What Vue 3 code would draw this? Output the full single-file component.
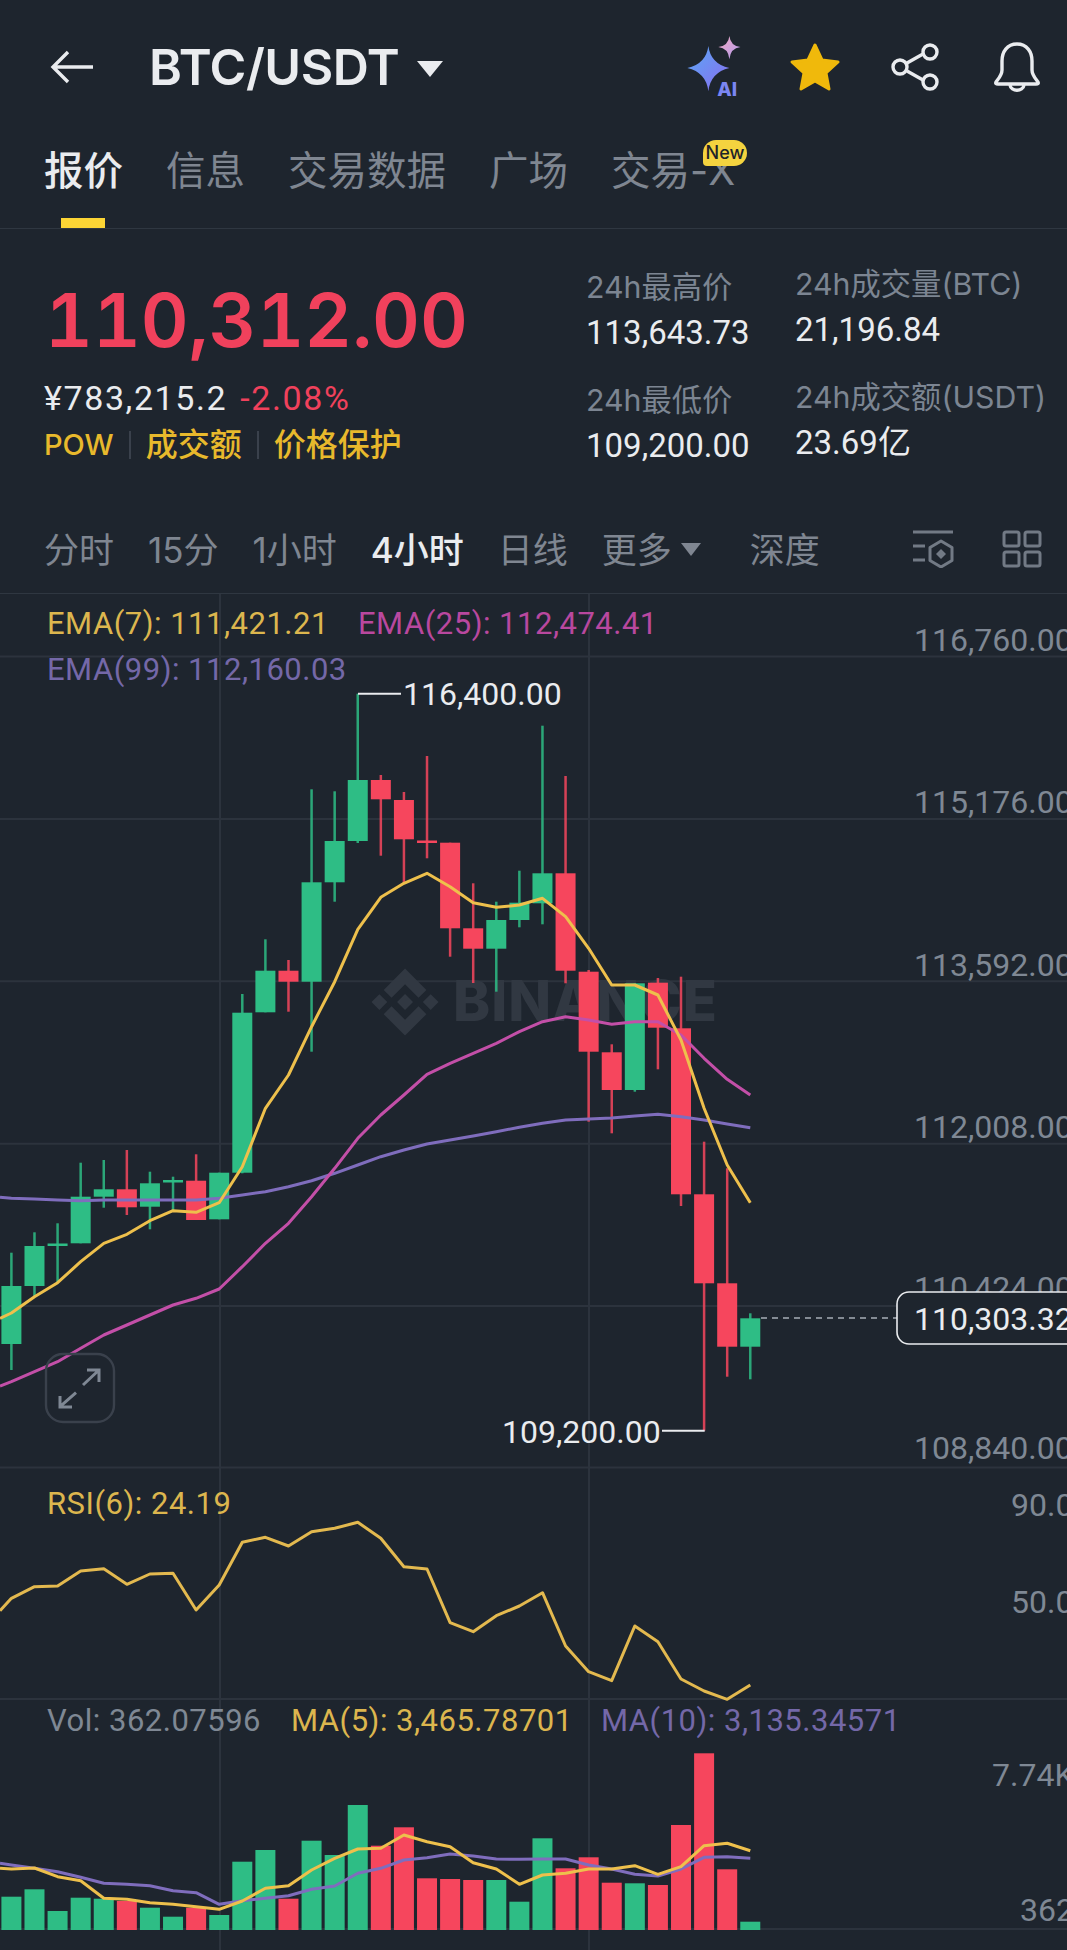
<script setup>
const tabs = ['报价', '信息', '交易数据', '广场', '交易-X']
const frames = ['分时', '15分', '1小时', '4小时', '日线']

const green = '#2ebd85'
const red = '#f6465d'
const step = 23.09
const cx = (i) => 11.4 + step * i

// [high, bodyTop, bodyBottom, low, up]
const raw = [
  [1252.7, 1286, 1344, 1370, 1],
  [1232.3, 1246, 1286, 1297, 1],
  [1223.3, 1243.5, 1246, 1282, 1],
  [1162.7, 1196.7, 1243.3, 1243.3, 1],
  [1160, 1189.3, 1196.7, 1207.7, 1],
  [1150, 1189.3, 1207.3, 1215, 0],
  [1171.7, 1183.3, 1206.7, 1229.3, 1],
  [1176.7, 1180, 1182.5, 1210, 1],
  [1154.3, 1180.7, 1220, 1220, 0],
  [1172.7, 1172.7, 1219.3, 1219.3, 1],
  [994, 1012.7, 1172.7, 1173.3, 1],
  [939.3, 970.7, 1012.3, 1012.3, 1],
  [960, 970.7, 981.7, 1011.7, 0],
  [789.3, 882.3, 981.7, 1051.7, 1],
  [791.3, 841, 882.3, 901.7, 1],
  [693.7, 780, 841, 843, 1],
  [775, 780, 799.3, 855.7, 0],
  [792, 800, 839.3, 883, 0],
  [756, 840.5, 842.5, 858.3, 0],
  [842.7, 842.7, 928.3, 956.7, 0],
  [883.3, 928.3, 948.7, 983, 0],
  [901.7, 920, 948.7, 991.7, 1],
  [870.7, 902.7, 920, 927.3, 1],
  [725.7, 873.3, 903.3, 924.3, 1],
  [776, 873.3, 970.7, 983.3, 0],
  [970, 971.7, 1051.7, 1121.7, 0],
  [1044.3, 1052.3, 1090, 1133.3, 0],
  [983.3, 983.3, 1090, 1091.7, 1],
  [978, 982.7, 1027.7, 1069.3, 0],
  [976.7, 1028.3, 1194.3, 1206, 0],
  [1141.7, 1194.3, 1283.3, 1430.7, 0],
  [1168.3, 1283.3, 1346.7, 1376.7, 0],
  [1313.3, 1318.3, 1346.7, 1379.3, 1],
]
const candles = raw.map((c, i) => ({
  x: cx(i), high: c[0], top: c[1], h: c[2] - c[1], low: c[3], color: c[4] ? green : red,
}))

const volTops = [
  1896.7, 1889.3, 1911, 1897.7, 1898.7, 1901, 1907.7, 1916.7, 1907.7, 1915, 1861.7,
  1850, 1898.7, 1840.7, 1855, 1805, 1845.7, 1827.3, 1878.3, 1879, 1880, 1880, 1901.7,
  1838.3, 1868.3, 1857.3, 1882.7, 1883.3, 1885, 1825, 1753.3, 1869.3, 1921.7,
]
const volBase = 1930
const bars = volTops.map((t, i) => ({ x: cx(i) - 10, y: t, h: volBase - t, color: raw[i][4] ? green : red }))

// line helper: first value sits on the left edge, the rest on candle centres
const line = (start, vals) => `0,${start} ` + vals.map((v, i) => `${cx(i).toFixed(1)},${v}`).join(' ')

const ema7 = line(1318.3, [1313, 1296.7, 1282.7, 1261.7, 1243.3, 1234.3, 1220.7, 1210.7, 1212.3, 1202.7, 1166.7, 1108.3, 1075, 1026.7, 981.7, 929.3, 897.3, 883.3, 873.3, 886.7, 902.7, 907.3, 905, 898.3, 916.7, 948.3, 985, 985, 995, 1040, 1108.3, 1165, 1202.7])
const ema25 = line(1386, [1381.7, 1371.7, 1361.7, 1348.3, 1335, 1325, 1315, 1305, 1298.3, 1289, 1266.7, 1243.3, 1223.3, 1196.7, 1168.3, 1138.3, 1115, 1095, 1074.3, 1063.3, 1053.3, 1043.3, 1031.7, 1021.7, 1016.7, 1020, 1024.3, 1021.7, 1021.7, 1035, 1058.3, 1079.3, 1095])
const ema99 = line(1197.3, [1198.3, 1199, 1200, 1200.7, 1200, 1200, 1200, 1200, 1200, 1198.3, 1195, 1191.7, 1186.7, 1180.7, 1173.3, 1165, 1156.7, 1150, 1144, 1140, 1136, 1131.7, 1127.3, 1123.3, 1120, 1119, 1118, 1116, 1114.3, 1116.7, 1120, 1124, 1127.7])
const rsi = line(1610.7, [1598.3, 1586.7, 1586, 1571, 1568.7, 1584.3, 1574, 1573.3, 1610, 1585, 1542.3, 1537.3, 1546, 1531.7, 1528.3, 1522.3, 1538.3, 1566.7, 1569, 1622.7, 1631.7, 1615.7, 1606, 1592.7, 1646, 1671.7, 1680.7, 1626, 1641.7, 1679, 1691, 1699.3, 1685])
const ma5 = line(1868.3, [1869, 1868, 1876.7, 1880.7, 1898.3, 1899.3, 1902.7, 1904.3, 1906.7, 1909.3, 1901, 1888.3, 1885.7, 1870, 1858.3, 1849, 1848.3, 1835, 1841.7, 1846.7, 1862.7, 1869, 1884.3, 1875, 1873.3, 1869, 1869, 1865.7, 1874.3, 1866.7, 1845.7, 1843.3, 1850.7])
const ma10 = line(1863.3, [1865, 1868.3, 1871.7, 1877.3, 1883.3, 1884.3, 1885.7, 1890.7, 1892.7, 1904.3, 1900.7, 1898.3, 1895.7, 1889.3, 1886, 1873.3, 1868.3, 1860, 1857.7, 1854, 1856, 1859, 1859.3, 1859, 1859, 1865, 1869, 1874.3, 1876, 1869, 1857.3, 1856.7, 1858.3])

const gridY = [656.5, 819, 981.3, 1143.7, 1306, 1467.5, 1699, 1929]
const axis = [
  { t: '116,760.00', x: 914, y: 640 },
  { t: '115,176.00', x: 914, y: 802 },
  { t: '113,592.00', x: 914, y: 965 },
  { t: '112,008.00', x: 914, y: 1127 },
  { t: '110,424.00', x: 914, y: 1288 },
  { t: '108,840.00', x: 914, y: 1448 },
  { t: '90.00', x: 1011, y: 1505 },
  { t: '50.00', x: 1011, y: 1602 },
  { t: '7.74K', x: 992, y: 1775 },
  { t: '362', x: 1020, y: 1910 },
]
</script>

<template>
  <div class="page">
    <header class="top">
      <svg class="back" width="44" height="34" viewBox="0 0 44 34">
        <path d="M18 2 3 17 18 32M3 17H43" fill="none" stroke="#eaecef" stroke-width="3.4" />
      </svg>
      <span class="pair">BTC/USDT</span>
      <span class="caret"></span>
      <div class="top-icons">
        <svg width="56" height="62" viewBox="0 0 50 56">
          <defs>
            <linearGradient id="sparkA" x1="0" y1="0" x2="1" y2="1">
              <stop offset="0" stop-color="#5aa9f5" />
              <stop offset="1" stop-color="#8a6cf0" />
            </linearGradient>
            <linearGradient id="sparkB" x1="0" y1="0" x2="1" y2="1">
              <stop offset="0" stop-color="#f0a9c0" />
              <stop offset="1" stop-color="#b39af0" />
            </linearGradient>
          </defs>
          <path d="M19 9Q21 25 38 29 21 33 19 50 17 33 0 29 17 25 19 9Z" fill="url(#sparkA)" />
          <path d="M38 0Q39 9 48 10 39 11 38 21 37 11 28 10 37 9 38 0Z" fill="url(#sparkB)" />
          <text class="ai" x="27" y="54">AI</text>
        </svg>
        <svg class="star" width="52" height="50" viewBox="0 0 52 50">
          <path d="M26 3 33 18 49 20 37 31 40 47 26 39 12 47 15 31 3 20 19 18Z" fill="#f0b90b" stroke="#f0b90b" stroke-width="3" stroke-linejoin="round" />
        </svg>
        <svg class="share" width="50" height="48" viewBox="0 0 50 48">
          <g fill="none" stroke="#eaecef" stroke-width="3.4">
            <path d="M16 20 32 11M16 28 32 37" />
            <circle cx="9" cy="24" r="7" />
            <circle cx="39" cy="9" r="7" />
            <circle cx="39" cy="39" r="7" />
          </g>
        </svg>
        <svg class="bell" width="48" height="52" viewBox="0 0 48 52">
          <g fill="none" stroke="#eaecef" stroke-width="3.4" stroke-linejoin="round">
            <path d="M24 3C14 3 9 11 9 20V29C9 34 6 37 3 41Q2 43 5 43H43Q46 43 45 41C42 37 39 34 39 29V20C39 11 34 3 24 3Z" />
            <path d="M17 44C18 51 30 51 31 44" />
          </g>
        </svg>
      </div>
    </header>

    <nav class="tabs">
      <span v-for="(t, i) in tabs" :key="t" class="tab" :class="{ on: i === 0 }">
        {{ t }}
        <i v-if="i === 0" class="bar"></i>
        <b v-if="i === 4" class="new">New</b>
      </span>
    </nav>

    <section class="quote">
      <div class="quote-left">
        <div class="price">110,312.00</div>
        <div class="sub"><span class="cny">¥783,215.2</span><span class="pct">-2.08%</span></div>
        <div class="tags">
          <span class="pow">POW</span><i></i><span>成交额</span><i></i><span>价格保护</span>
        </div>
      </div>
      <div class="stats first">
        <div class="lbl">24h最高价</div>
        <div class="val">113,643.73</div>
        <div class="lbl">24h最低价</div>
        <div class="val">109,200.00</div>
      </div>
      <div class="stats second">
        <div class="lbl">24h成交量(BTC)</div>
        <div class="val">21,196.84</div>
        <div class="lbl">24h成交额(USDT)</div>
        <div class="val">23.69亿</div>
      </div>
    </section>

    <div class="frames">
      <span v-for="f in frames" :key="f" class="frame" :class="{ on: f === '4小时' }">{{ f }}</span>
      <span class="frame more">更多<i class="more-caret"></i></span>
      <span class="frame">深度</span>
      <div class="frame-icons">
        <svg width="42" height="38" viewBox="0 0 42 38">
          <g fill="none" stroke="#727a85" stroke-width="3">
            <path d="M1 2H41M1 16H13M1 30H13" />
            <path d="M29 11 40 17.5V30.5L29 37 18 30.5V17.5Z" stroke-linejoin="round" />
            <path d="M29 19 34 24 29 29 24 24Z" fill="#727a85" stroke="none" />
          </g>
        </svg>
        <svg width="40" height="38" viewBox="0 0 40 38">
          <g fill="none" stroke="#727a85" stroke-width="3">
            <rect x="2" y="2" width="15" height="14" rx="2" />
            <rect x="23" y="2" width="15" height="14" rx="2" />
            <rect x="2" y="22" width="15" height="14" rx="2" />
            <rect x="23" y="22" width="15" height="14" rx="2" />
          </g>
        </svg>
      </div>
    </div>

    <div class="chart">
      <svg width="1067" height="1356" viewBox="0 594 1067 1356">
        <g class="grid">
          <line v-for="y in gridY" :key="y" x1="0" x2="1067" :y1="y" :y2="y" />
          <line x1="220" x2="220" y1="594" y2="1950" />
          <line x1="589" x2="589" y1="594" y2="1950" />
        </g>

        <!-- watermark -->
        <g fill="#313842">
          <path transform="translate(367 964) scale(.634)" d="M38.73 53.2 60 31.94l21.28 21.27 12.38-12.38L60 7.17 26.35 40.82zM7.17 60l12.38-12.38L31.93 60 19.55 72.38zM38.73 66.8 60 88.06l21.28-21.27 12.39 12.37L60 112.83 26.35 79.18zM88.07 60l12.38-12.38L112.83 60l-12.38 12.38zM72.56 60 60 47.44 47.44 60 60 72.57z" />
          <text class="mark" x="453" y="1021">BINANCE</text>
        </g>

        <g v-for="(c, i) in candles" :key="i" :fill="c.color">
          <rect :x="c.x - 1.25" :y="c.high" width="2.5" :height="c.low - c.high" :fill-opacity="0.85" />
          <rect :x="c.x - 10" :y="c.top" width="20" :height="Math.max(c.h, 2.5)" />
        </g>

        <g fill="none" stroke-width="3" stroke-linejoin="round">
          <polyline :points="ema99" stroke="#7f6dbd" />
          <polyline :points="ema25" stroke="#c34fa8" />
          <polyline :points="ema7" stroke="#eec04c" />
        </g>

        <path d="M358 693.7H401M662 1430.7H704.7" fill="none" stroke="#eaecef" stroke-width="2" />
        <text class="t label" x="403" y="694">116,400.00</text>
        <text class="t label" x="502" y="1432">109,200.00</text>

        <text v-for="a in axis" :key="a.t" class="t axis" :x="a.x" :y="a.y">{{ a.t }}</text>

        <path d="M761 1318H897" stroke="#a7adb6" stroke-width="1.6" stroke-dasharray="6 5" />
        <rect x="897" y="1292" width="200" height="52" rx="12" fill="#1e252e" stroke="#eaecef" stroke-width="1.6" />
        <text class="t label" x="914" y="1319">110,303.32</text>

        <text class="t leg" x="47" y="623" fill="#dcb64e">EMA(7): 111,421.21</text>
        <text class="t leg" x="358" y="623" fill="#b9489f">EMA(25): 112,474.41</text>
        <text class="t leg" x="47" y="669" fill="#7468a8">EMA(99): 112,160.03</text>

        <g>
          <rect x="46" y="1354" width="68" height="68" rx="17" fill="none" stroke="#3a414c" stroke-width="2.4" />
          <path d="M60 1406.7 76 1392.7M60 1396V1407H72M83 1385 99 1370M87 1370H99V1382" fill="none" stroke="#7f8894" stroke-width="3" />
        </g>

        <text class="t leg" x="47" y="1503" fill="#dcb64e">RSI(6): 24.19</text>
        <polyline :points="rsi" fill="none" stroke="#e3b94f" stroke-width="3" stroke-linejoin="round" />

        <text class="t leg" x="47" y="1720" fill="#7f8894">Vol: 362.07596</text>
        <text class="t leg" x="291" y="1720" fill="#dcb64e">MA(5): 3,465.78701</text>
        <text class="t leg" x="601" y="1720" fill="#7468a8">MA(10): 3,135.34571</text>

        <rect v-for="(b, i) in bars" :key="i" :x="b.x" :y="b.y" width="20" :height="b.h" :fill="b.color" />
        <g fill="none" stroke-width="3" stroke-linejoin="round">
          <polyline :points="ma10" stroke="#7f6dbd" />
          <polyline :points="ma5" stroke="#eec04c" />
        </g>
      </svg>
    </div>
  </div>
</template>

<style scoped>
.page {
  width: 1067px;
  height: 1950px;
  overflow: hidden;
  background: #1e252e;
  font-family: Inter, "Noto Sans CJK SC", sans-serif;
  color: #eaecef;
}
.top {
  height: 110px;
  padding: 24px 26px 0 50px;
  box-sizing: border-box;
  display: flex;
  align-items: center;
}
.pair {
  margin-left: 55px;
  font-size: 50px;
  font-weight: 600;
  letter-spacing: -0.5px;
}
.caret {
  margin-left: 18px;
  margin-top: 4px;
  border-left: 13px solid transparent;
  border-right: 13px solid transparent;
  border-top: 16px solid #eaecef;
}
.top-icons {
  margin-left: auto;
  display: flex;
  align-items: center;
}
.star { margin-left: 46px; }
.share { margin-left: 50px; }
.bell { margin-left: 52px; }
.ai {
  font-family: Inter, sans-serif;
  font-size: 17px;
  font-weight: 800;
  fill: #7b86f2;
}
.tabs {
  height: 119px;
  box-sizing: border-box;
  padding: 41px 0 0 44px;
  display: flex;
  gap: 43px;
  border-bottom: 1px solid #2f3741;
}
.tab {
  position: relative;
  font-size: 39.5px;
  line-height: 40px;
  height: 40px;
  color: #7f8691;
}
.tab.on {
  color: #eaecef;
  font-weight: 500;
}
.bar {
  position: absolute;
  left: 17px;
  top: 67px;
  width: 44px;
  height: 10px;
  background: #fcd535;
}
.new {
  position: absolute;
  left: 92px;
  top: -11px;
  width: 44px;
  height: 26px;
  border-radius: 13px 13px 13px 4px;
  background: #f4d33f;
  color: #1e2329;
  font-size: 18px;
  font-weight: 500;
  line-height: 26px;
  text-align: center;
}
.quote {
  height: 275px;
  display: flex;
}
.quote-left {
  width: 586px;
  padding: 51px 0 0 44px;
  box-sizing: border-box;
}
.price {
  font-size: 74px;
  font-weight: 600;
  font-variant-numeric: tabular-nums;
  line-height: 80px;
  color: #f0415c;
  margin-left: 1px;
}
.sub {
  margin-top: 20px;
  display: flex;
  gap: 13px;
  font-family: Roboto, sans-serif;
  font-size: 34px;
  letter-spacing: 1.6px;
  line-height: 36px;
}
.pct { color: #f0415c; }
.tags {
  margin-top: 11px;
  display: flex;
  align-items: center;
  font-size: 32px;
  font-weight: 500;
  line-height: 36px;
  color: #e8b92c;
}
.pow { font-size: 29px; }
.tags i {
  width: 2px;
  height: 28px;
  margin: 0 15px;
  background: #3a414c;
}
.stats { width: 209px; }
.stats.first { padding-top: 40px; }
.stats.second { padding-top: 37px; }
.lbl {
  font-size: 30.3px;
  line-height: 36px;
  color: #7c8592;
  white-space: nowrap;
}
.val {
  font-family: Roboto, "Noto Sans CJK SC", sans-serif;
  font-size: 33px;
  line-height: 36px;
  margin-top: 10px;
  margin-bottom: 31px;
  white-space: nowrap;
}
.frames {
  height: 90px;
  box-sizing: border-box;
  padding: 0 25px 3px 44px;
  display: flex;
  align-items: center;
  gap: 34px;
  border-bottom: 1px solid #2f3741;
  font-size: 35px;
  color: #7f8691;
}
.frame.on {
  color: #eaecef;
  font-weight: 500;
}
.more { display: flex; align-items: center; }
.more-caret {
  margin-left: 9px;
  margin-top: 4px;
  margin-right: 15px;
  border-left: 10px solid transparent;
  border-right: 10px solid transparent;
  border-top: 13px solid #7f8691;
}
.frame-icons {
  margin-left: auto;
  display: flex;
  align-items: center;
  gap: 48px;
  margin-top: 3px;
}
.chart svg { display: block; }
.grid line {
  stroke: #2c333d;
  stroke-width: 2;
}
.mark {
  font-family: Inter, sans-serif;
  font-size: 56px;
  font-weight: 800;
  letter-spacing: 1px;
}
.t {
  font-family: Roboto, sans-serif;
  dominant-baseline: central;
}
.leg { font-size: 31px; letter-spacing: 0.5px; }
.axis { font-size: 32px; fill: #7f8894; }
.label { font-size: 32px; fill: #eaecef; }
</style>

<style>
html, body {
  background: #1e252e;
}
</style>
